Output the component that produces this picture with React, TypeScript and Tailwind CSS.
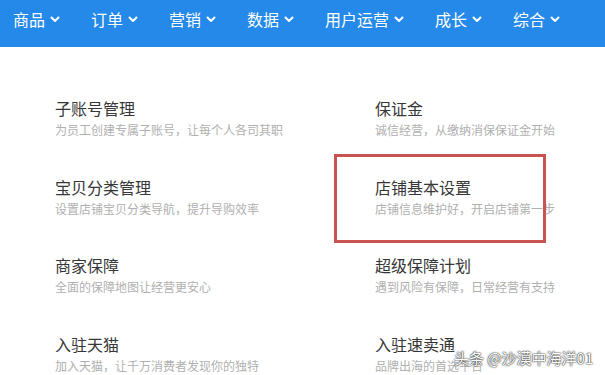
const navItems = ["商品", "订单", "营销", "数据", "用户运营", "成长", "综合"]

const entries = [
    { title: "子账号管理", desc: "为员工创建专属子账号，让每个人各司其职" },
    { title: "保证金", desc: "诚信经营，从缴纳消保保证金开始" },
    { title: "宝贝分类管理", desc: "设置店铺宝贝分类导航，提升导购效率" },
    { title: "店铺基本设置", desc: "店铺信息维护好，开启店铺第一步", marked: true },
    { title: "商家保障", desc: "全面的保障地图让经营更安心" },
    { title: "超级保障计划", desc: "遇到风险有保障，日常经营有支持" },
    { title: "入驻天猫", desc: "加入天猫，让千万消费者发现你的独特" },
    { title: "入驻速卖通", desc: "品牌出海的首选平台" },
]

const Chevron = () => (
    <svg width="10" height="7" viewBox="0 0 10 7" className="ml-[5px] mt-[1px]">
        <path d="M1.5 1.5 L5 5 L8.5 1.5" fill="none" stroke="white" strokeWidth="2" strokeLinecap="round" strokeLinejoin="round" />
    </svg>
)

export default function App() {
    return (
        <div
            className="relative w-[605px] h-[375px] overflow-hidden bg-white"
            style={{ fontFamily: '"Microsoft YaHei", "Noto Sans CJK SC", "Noto Sans", sans-serif' }}
        >
            <div className="h-[47px] bg-[#2589e9] flex items-start pl-[13px] pt-[11px] gap-[31px]">
                {navItems.map((item) => (
                    <div key={item} className="flex items-center text-white text-[16px] leading-[16px]">
                        {item}
                        <Chevron />
                    </div>
                ))}
            </div>

            <div className="grid grid-cols-[320px_1fr] pl-[55px] pt-[50px] gap-y-[37.5px]">
                {entries.map((e) => (
                    <div key={e.title} className="relative flex flex-col whitespace-nowrap">
                        <div className="text-[16px] leading-[22px] text-[#363636]">{e.title}</div>
                        <div className="mt-[3px] text-[12px] leading-[16px] text-[#b0b0b0]">{e.desc}</div>
                        {e.marked && (
                            <div className="absolute -left-[41px] -top-[22px] w-[212px] h-[89px] border-[3px] border-[#c9534f]" />
                        )}
                    </div>
                ))}
            </div>

            <div
                className="absolute left-[454px] top-[349px] text-[15px] leading-[18px] text-white whitespace-nowrap"
                style={{ textShadow: "0 0 2px rgba(0,0,0,0.9), 0 0 1px rgba(0,0,0,0.9)" }}
            >
                头条 @沙漠中海洋01
            </div>
        </div>
    )
}
